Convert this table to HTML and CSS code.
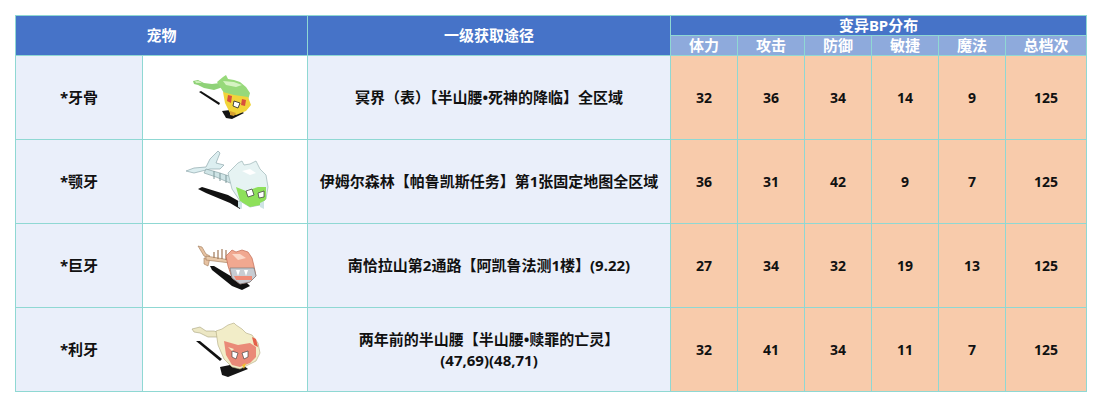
FILE: index.html
```html
<!DOCTYPE html>
<html lang="zh">
<head>
<meta charset="utf-8">
<title>变异BP分布</title>
<link rel="stylesheet" href="styles.css">
</head>
<body>
<table class="bp-table">
  <colgroup>
    <col class="c-name">
    <col class="c-img">
    <col class="c-route">
    <col class="c-stat">
    <col class="c-stat">
    <col class="c-stat">
    <col class="c-stat">
    <col class="c-stat">
    <col class="c-total">
  </colgroup>
  <thead>
    <tr class="h1">
      <th colspan="2" rowspan="2">宠物</th>
      <th rowspan="2">一级获取途径</th>
      <th colspan="6">变异BP分布</th>
    </tr>
    <tr class="h2">
      <th class="sub">体力</th>
      <th class="sub">攻击</th>
      <th class="sub">防御</th>
      <th class="sub">敏捷</th>
      <th class="sub">魔法</th>
      <th class="sub">总档次</th>
    </tr>
  </thead>
  <tbody>
    <tr>
      <td class="name">*牙骨</td>
      <td class="img">
        <svg class="sprite s1" width="70" height="50" viewBox="0 0 70 50">
          <polygon points="9,19 11,18 30,30 29,32" fill="#111"/>
          <polygon points="32,38 48,36 54,40 42,46 36,45" fill="#141414"/>
          <polygon points="3,8 8,7 14,10 22,11 30,10 33,14 24,17 14,15 8,12 4,11" fill="#8fd278"/>
          <polygon points="5,8 9,8 12,10 6,10" fill="#c9efb5"/>
          <polygon points="27,9 33,4 36,2 38,6 44,7 50,9 56,14 60,20 58,27 46,24 34,20" fill="#97d97a"/>
          <polygon points="33,8 44,9 52,12 46,14 36,12" fill="#d6f3c2"/>
          <polygon points="33,19 44,22 58,24 61,32 56,38 46,42 40,40 35,30" fill="#f1d43a"/>
          <polygon points="38,22 42,23 41,30 37,28" fill="#d8503c"/>
          <polygon points="52,26 56,27 55,33 51,32" fill="#d8503c"/>
          <polygon points="44,28 50,30 48,35 43,33" fill="#fff" stroke="#222" stroke-width="0.8"/>
          <polygon points="40,38 46,40 44,43 40,42" fill="#d8a030"/>
        </svg>
      </td>
      <td class="route">冥界（表）【半山腰•死神的降临】全区域</td>
      <td class="num">32</td>
      <td class="num">36</td>
      <td class="num">34</td>
      <td class="num">14</td>
      <td class="num">9</td>
      <td class="num">125</td>
    </tr>
    <tr>
      <td class="name">*颚牙</td>
      <td class="img">
        <svg class="sprite s2" width="90" height="70" viewBox="0 0 90 70">
          <polygon points="18,42 22,40 48,48 62,56 60,62 50,56 26,46" fill="#111"/>
          <polygon points="30,12 38,4 40,6 36,16 44,18 40,22 30,22 14,26 6,24 14,21 26,20" fill="#dceef0" stroke="#8ea8ac" stroke-width="0.7"/>
          <polygon points="26,22 40,26 52,30 56,34 50,36 36,30 24,26" fill="#cfe4e6" stroke="#7f9a9c" stroke-width="0.6"/>
          <line x1="34" y1="24" x2="34" y2="32" stroke="#7f9a9c" stroke-width="1"/>
          <line x1="40" y1="26" x2="40" y2="34" stroke="#7f9a9c" stroke-width="1"/>
          <line x1="46" y1="28" x2="46" y2="36" stroke="#7f9a9c" stroke-width="1"/>
          <polygon points="48,26 58,16 62,14 64,18 70,17 76,14 80,22 86,28 88,40 86,52 80,58 70,60 60,54 52,42" fill="#e6f3f3" stroke="#9bb4b6" stroke-width="0.7"/>
          <polygon points="56,40 66,44 78,40 86,40 86,52 80,58 70,60 60,54" fill="#8ee05a"/>
          <polygon points="62,24 70,28 76,26 70,22" fill="#ffffff"/>
          <polygon points="66,44 72,42 74,48 68,50" fill="#fff" stroke="#333" stroke-width="0.7"/>
          <polygon points="78,46 84,44 84,50 79,51" fill="#fff" stroke="#333" stroke-width="0.7"/>
          <polygon points="58,54 62,55 62,62 58,60" fill="#cfe4e6"/>
          <polygon points="80,56 84,54 84,62 80,60" fill="#cfe4e6"/>
        </svg>
      </td>
      <td class="route">伊姆尔森林【帕鲁凯斯任务】第1张固定地图全区域</td>
      <td class="num">36</td>
      <td class="num">31</td>
      <td class="num">42</td>
      <td class="num">9</td>
      <td class="num">7</td>
      <td class="num">125</td>
    </tr>
    <tr>
      <td class="name">*巨牙</td>
      <td class="img">
        <svg class="sprite s3" width="70" height="60" viewBox="0 0 70 60">
          <polygon points="20,30 24,30 44,42 56,46 60,50 52,54 42,50 22,34" fill="#111"/>
          <polygon points="8,10 12,11 16,18 20,20 18,22 14,20" fill="#e6c2a2" stroke="#a07858" stroke-width="0.6"/>
          <polygon points="14,22 20,22 18,30 14,28" fill="#e6c2a2" stroke="#a07858" stroke-width="0.6"/>
          <polygon points="16,20 40,24 40,27 16,24" fill="#e8c8a8" stroke="#a07858" stroke-width="0.6"/>
          <line x1="24" y1="22" x2="24" y2="16" stroke="#a07858" stroke-width="1.2"/>
          <line x1="28" y1="23" x2="28" y2="14" stroke="#a07858" stroke-width="1.2"/>
          <line x1="32" y1="23" x2="32" y2="13" stroke="#a07858" stroke-width="1.2"/>
          <line x1="36" y1="24" x2="36" y2="14" stroke="#a07858" stroke-width="1.2"/>
          <polygon points="36,20 42,14 46,16 52,14 58,16 62,22 64,30 66,40 60,46 50,48 42,42 38,30" fill="#f1a890" stroke="#c06a52" stroke-width="0.7"/>
          <polygon points="42,18 50,18 56,22 48,24" fill="#fbd8c8"/>
          <polygon points="40,32 64,32 66,40 60,46 50,48 42,42" fill="#c8ccd2" stroke="#6a6e74" stroke-width="0.6"/>
          <polygon points="46,34 50,34 48,40" fill="#fff"/>
          <polygon points="54,34 58,34 56,40" fill="#fff"/>
          <polygon points="44,40 62,40 62,44 46,44" fill="#ef8c78"/>
        </svg>
      </td>
      <td class="route">南恰拉山第2通路【阿凯鲁法测1楼】(9.22)</td>
      <td class="num">27</td>
      <td class="num">34</td>
      <td class="num">32</td>
      <td class="num">19</td>
      <td class="num">13</td>
      <td class="num">125</td>
    </tr>
    <tr>
      <td class="name">*利牙</td>
      <td class="img">
        <svg class="sprite s4" width="75" height="65" viewBox="0 0 75 65">
          <polygon points="8,24 12,24 34,42 32,44" fill="#111"/>
          <polygon points="32,50 52,46 60,52 40,60 34,58" fill="#151515"/>
          <polygon points="4,12 12,10 18,14 26,14 32,16 30,20 20,20 12,16 6,15" fill="#ece7c4" stroke="#a8a27c" stroke-width="0.6"/>
          <polygon points="28,14 34,12 40,8 46,6 48,8 54,12 58,16 64,18 70,26 72,36 68,44 60,48 52,52 44,50 36,42 30,28" fill="#f2edc8" stroke="#b0a880" stroke-width="0.6"/>
          <polygon points="36,24 50,28 62,26 68,30 68,40 62,46 52,50 44,48 38,38" fill="#ea8a78"/>
          <polygon points="44,34 50,36 48,42 44,40" fill="#fff" stroke="#333" stroke-width="0.6"/>
          <polygon points="54,36 60,34 60,40 56,42" fill="#fff" stroke="#333" stroke-width="0.6"/>
          <polygon points="40,30 46,32 44,34" fill="#f2edc8"/>
          <polygon points="54,48 58,46 56,52" fill="#f0c030"/>
          <polygon points="64,20 68,22 70,30 66,28" fill="#e4604a"/>
        </svg>
      </td>
      <td class="route">两年前的半山腰【半山腰•赎罪的亡灵】<br>(47,69)(48,71)</td>
      <td class="num">32</td>
      <td class="num">41</td>
      <td class="num">34</td>
      <td class="num">11</td>
      <td class="num">7</td>
      <td class="num">125</td>
    </tr>
  </tbody>
</table>
</body>
</html>
```

FILE: styles.css
```css
html, body {
  margin: 0;
  padding: 0;
  background: #ffffff;
}

body {
  padding: 15px 0 0 15px;
  font-family: "Noto Sans", "Noto Sans CJK SC", sans-serif;
  font-weight: 700;
  font-size: 15px;
  color: #111;
}

.bp-table {
  border-collapse: collapse;
  table-layout: fixed;
  width: 1071px;
}

.c-name { width: 127px; }
.c-img { width: 165px; }
.c-route { width: 363px; }
.c-stat { width: 67px; }
.c-total { width: 81px; }

.bp-table th,
.bp-table td {
  border: 1px solid #8fd8d3;
  padding: 0;
  text-align: center;
  vertical-align: middle;
  line-height: 21px;
}

.bp-table th {
  background: #4673c8;
  color: #ffffff;
  font-weight: 700;
}

.h1 th { height: 19px; line-height: 19px; }
.h2 th { height: 19px; line-height: 19px; }

.bp-table th.sub {
  background: #8eaadc;
}

.bp-table tbody td {
  height: 83px;
}

.name,
.route {
  background: #eaeffa;
}

.img {
  background: #ffffff;
}

.num {
  background: #f8cbab;
  font-size: 14px;
}

.sprite {
  display: block;
  margin: 0 auto;
}
```
